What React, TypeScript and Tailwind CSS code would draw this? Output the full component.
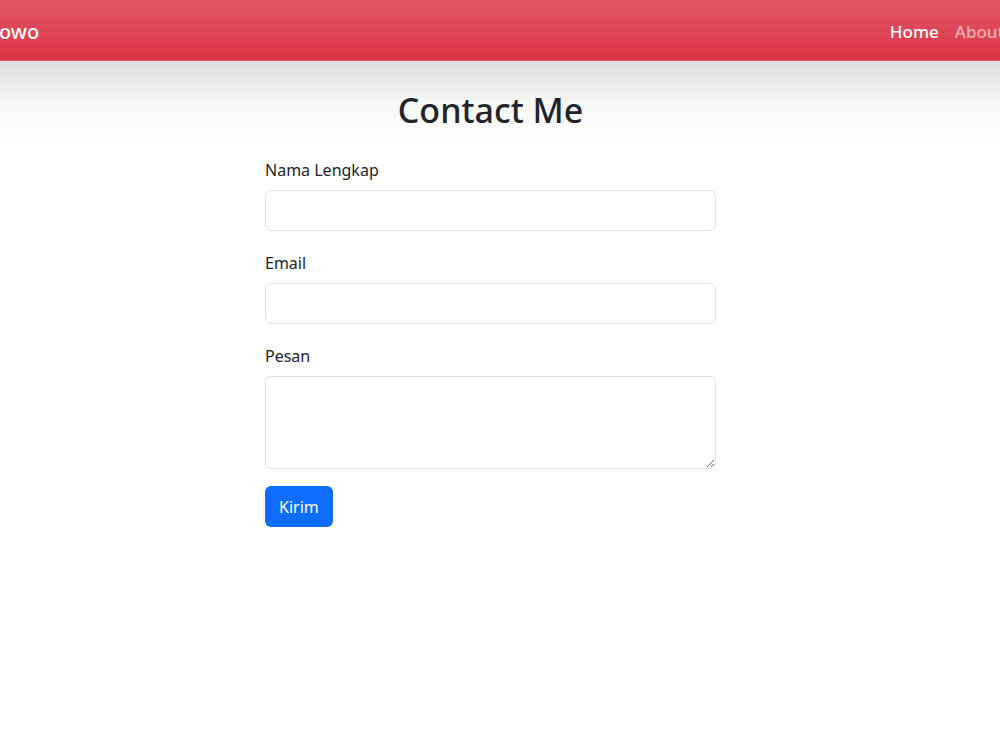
import React from "react";

const Field: React.FC<{ label: string; area?: boolean }> = ({ label, area }) => (
  <div className="flex flex-col mb-[19px]">
    <label className="text-[16px] leading-[26px] text-[#212529] mb-[7px]">{label}</label>
    {area ? (
      <textarea className="h-[93px] w-full rounded-[6px] border border-[#dee2e6] bg-white px-3 py-2 outline-none" />
    ) : (
      <input type="text" className="h-[41px] w-full rounded-[6px] border border-[#dee2e6] bg-white px-3 outline-none" />
    )}
  </div>
);

export default function App() {
  return (
    <div className="w-[1000px] h-[750px] overflow-hidden bg-white font-['Noto_Sans','Open_Sans',sans-serif]">
      <nav className="h-[61px] pt-[3px] flex items-center justify-between bg-gradient-to-b from-[#e25566] to-[#dc3545] border-b border-[#e35a69]">
        <span className="-ml-[1px] text-[20px] font-medium text-white">owo</span>
        <div className="flex items-center gap-[16px] -mr-[4px] text-[17px] font-medium">
          <span className="text-white">Home</span>
          <span className="text-white/55">About</span>
        </div>
      </nav>
      <div className="w-full bg-gradient-to-b from-[#dedede] via-[#f6f6f6] via-45% to-white h-[85px] -mb-[85px]" />
      <main className="w-[981px] flex flex-col items-center pt-[27px]">
        <h1 className="text-[34px] leading-[44px] font-medium text-[#212529] mb-[25px]">Contact Me</h1>
        <form className="w-[451px] flex flex-col">
          <Field label="Nama Lengkap" />
          <Field label="Email" />
          <Field label="Pesan" area />
          <button type="button" className="self-start -mt-[2px] h-[41px] px-[14px] rounded-[6px] bg-[#0d6efd] text-white text-[16px]">
            Kirim
          </button>
        </form>
      </main>
    </div>
  );
}
